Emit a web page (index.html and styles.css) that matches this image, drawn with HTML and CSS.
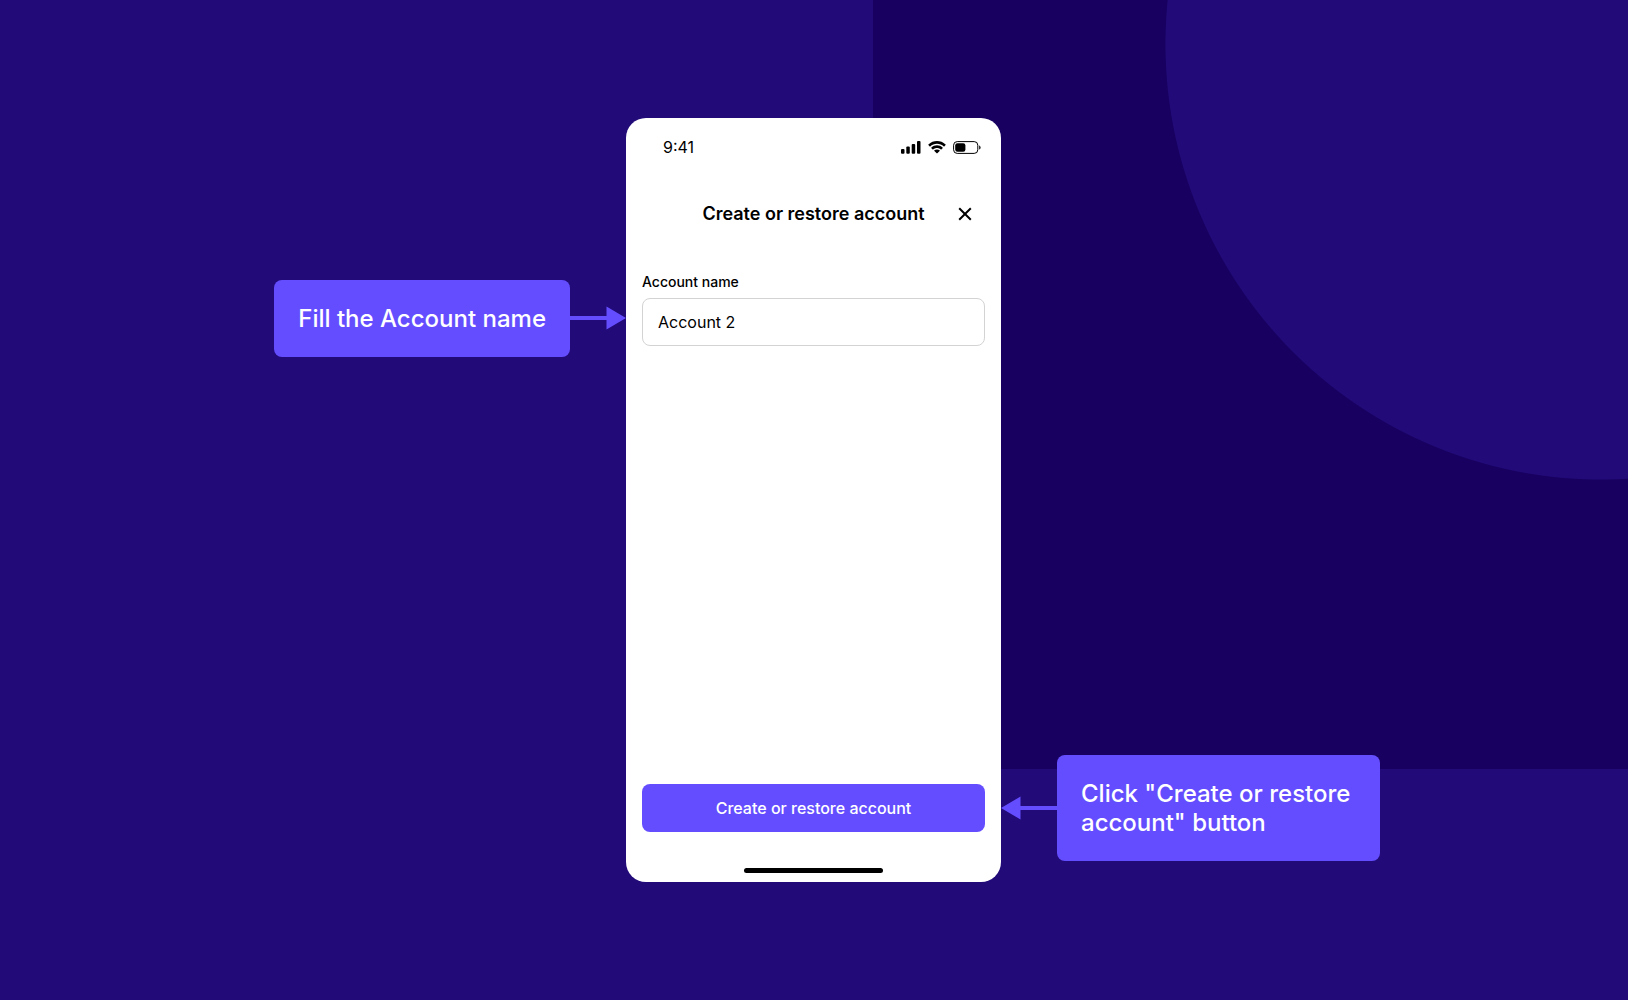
FILE: index.html
```html
<!DOCTYPE html>
<html lang="en">
<head>
  <meta charset="UTF-8">
  <meta name="viewport" content="width=device-width, initial-scale=1.0">
  <title>Create or restore account</title>
  <link rel="stylesheet" href="styles.css">
</head>
<body>
  <main class="guide">
    <div class="step step-left">
      <p class="callout">Fill the Account name</p>
      <svg class="arrow" width="56" height="24" viewBox="0 0 56 24" aria-hidden="true">
        <path d="M0 10h36.500V.5L56 12 36.500 23.500V14H0z" fill="currentColor"/>
      </svg>
    </div>

    <form class="phone">
      <div class="status-bar">
        <span class="time">9:41</span>
        <div class="status-icons">
          <svg width="20" height="13" viewBox="0 0 20 13" aria-hidden="true">
            <rect x="0" y="8" width="3.500" height="4.800" rx="1"/>
            <rect x="5.300" y="5.600" width="3.500" height="7.200" rx="1"/>
            <rect x="10.700" y="3" width="3.500" height="9.800" rx="1"/>
            <rect x="16" y="0" width="3.500" height="12.800" rx="1"/>
          </svg>
          <svg width="18" height="13" viewBox="0 0 17 12" aria-hidden="true">
            <path d="M8.500 2.400c2.400 0 4.700.9 6.400 2.600.1.100.3.100.5 0l1.200-1.300c.2-.1.200-.4 0-.5-4.500-4.300-11.700-4.300-16.200 0-.2.100-.2.400 0 .5l1.200 1.300c.2.100.4.100.5 0C3.800 3.300 6.100 2.400 8.500 2.400z"/>
            <path d="M8.500 6.500c1.300 0 2.600.5 3.600 1.400.1.100.4.100.5 0l1.200-1.300c.2-.1.200-.4 0-.5-3-2.900-7.600-2.900-10.600 0-.2.100-.2.400 0 .5l1.200 1.300c.1.100.4.100.5 0 1-.9 2.300-1.400 3.600-1.400z"/>
            <path d="M11 9.200c.1-.1.100-.4 0-.5-1.400-1.200-3.600-1.200-5 0-.1.100-.1.400 0 .5l2.200 2.200c.2.200.4.200.6 0z"/>
          </svg>
          <svg width="28" height="13" viewBox="0 0 28 13" aria-hidden="true">
            <rect x=".6" y=".6" width="24.200" height="11.800" rx="3.600" fill="none" stroke="currentColor"/>
            <rect x="2.200" y="2.200" width="10.200" height="8.600" rx="2.200"/>
            <path d="M26.200 4.400v4.200c.8-.4 1.400-1.200 1.400-2.100s-.6-1.700-1.400-2.100z"/>
          </svg>
        </div>
      </div>

      <header class="title-bar">
        <h1>Create or restore account</h1>
        <button class="close" type="button" aria-label="Close">
          <svg width="14" height="14" viewBox="0 0 14 14" aria-hidden="true">
            <path d="M1.200 1.200l11.600 11.600M12.800 1.200L1.200 12.800" stroke="currentColor" stroke-width="2"/>
          </svg>
        </button>
      </header>

      <div class="field">
        <label for="accountName">Account name</label>
        <input type="text" id="accountName" value="Account 2">
      </div>

      <button class="submit" type="button">Create or restore account</button>
      <div class="home-indicator"></div>
    </form>

    <div class="step step-right">
      <svg class="arrow" width="56" height="24" viewBox="0 0 56 24" aria-hidden="true">
        <path d="M56 10H19.500V.5L0 12l19.500 11.500V14H56z" fill="currentColor"/>
      </svg>
      <p class="callout">Click "Create or restore<br>account" button</p>
    </div>
  </main>
</body>
</html>
```
FILE: styles.css
```css
* { box-sizing: border-box; }

body {
  margin: 0;
  font-family: Inter, "Liberation Sans", sans-serif;
  color: #000;
  background:
    radial-gradient(circle at calc(100% - 27px) 44px, #220b79 435px, transparent 436px),
    linear-gradient(#170060, #170060) right top / 755px 769px no-repeat,
    #220b79;
}

.guide {
  display: grid;
  grid-template-columns: 1fr 375px 1fr;
  align-items: center;
  min-height: 100vh;
  padding-right: 1px;
}

/* Callouts line up with the control they describe */
.step { display: flex; align-items: center; height: 764px; color: #644dff; }
.step-left { justify-content: flex-end; padding-bottom: 364px; }
.step-right { padding-top: 616px; }
.arrow { display: block; flex: none; }
.callout {
  margin: 0;
  padding: 24px;
  border-radius: 8px;
  background: #644dff;
  color: #fff;
  font-size: 24px;
  font-weight: 500;
  line-height: 29px;
}
.step-right .callout { padding-right: 30px; }

/* Phone */
.phone {
  display: flex;
  flex-direction: column;
  min-height: 764px;
  padding: 0 16px 9px;
  border-radius: 20px;
  background: #fff;
}
.status-bar {
  display: flex;
  align-items: center;
  justify-content: space-between;
  padding: 19px 4px 0 21px;
}
.time { font-size: 16px; line-height: 20px; }
.status-icons { display: flex; align-items: center; gap: 7px; }
.status-icons svg { display: block; }

.title-bar {
  display: grid;
  grid-template-columns: 40px 1fr 40px;
  align-items: center;
  margin-top: 37px;
}
h1 {
  grid-column: 2;
  margin: 0;
  font-size: 18px;
  font-weight: 600;
  line-height: 40px;
  text-align: center;
}
.close {
  display: flex;
  align-items: center;
  justify-content: center;
  height: 38px;
  padding: 0;
  border: 0;
  background: none;
  color: #000;
  cursor: pointer;
}

.field { display: flex; flex-direction: column; gap: 6px; margin-top: 38px; }
label { font-size: 14px; font-weight: 500; line-height: 20px; }
input {
  width: 100%;
  height: 48px;
  padding: 0 15px;
  border: 1px solid #d3d3d3;
  border-radius: 8px;
  background: #fff;
  color: #000;
  font-family: inherit;
  font-size: 16px;
}

.submit {
  height: 48px;
  margin-top: auto;
  border: 0;
  border-radius: 8px;
  background: #644dff;
  color: #fff;
  font-family: inherit;
  font-size: 16px;
  font-weight: 500;
  cursor: pointer;
}
.home-indicator {
  align-self: center;
  width: 139px;
  height: 5px;
  margin-top: 36px;
  border-radius: 3px;
  background: #000;
}
```
